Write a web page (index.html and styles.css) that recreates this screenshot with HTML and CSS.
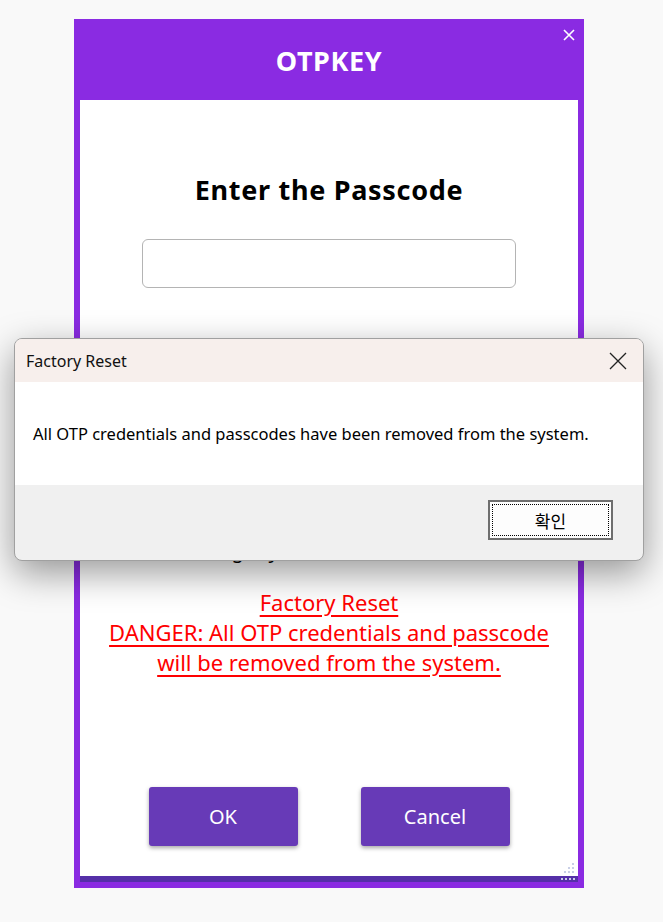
FILE: index.html
```html
<!DOCTYPE html>
<html lang="en">
<head>
    <meta charset="UTF-8">
    <meta name="viewport" content="width=device-width, initial-scale=1.0">
    <title>OTPKEY</title>
    <link rel="stylesheet" href="styles.css">
</head>
<body>
    <div class="window">
        <div class="titlebar">
            <h1>OTPKEY</h1>
            <svg class="close" width="12" height="12" viewBox="0 0 12 12">
                <path d="M1 1 L11 11 M11 1 L1 11" stroke="#fff" stroke-width="1.6" fill="none"/>
            </svg>
        </div>

        <div class="content">
            <h2>Enter the Passcode</h2>
            <input type="password" class="passcode">

            <p class="hint">Forgot your PIN? Use Reset</p>

            <a class="danger" href="#">Factory Reset<br>DANGER: All OTP credentials and passcode<br>will be removed from the system.</a>

            <div class="actions">
                <button class="btn">OK</button>
                <button class="btn">Cancel</button>
            </div>

            <svg class="grip" width="16" height="16" viewBox="0 0 16 16">
                <rect x="13" y="1" width="2" height="2" fill="#c9cfe6"/>
                <rect x="13" y="5" width="2" height="2" fill="#c9cfe6"/>
                <rect x="9" y="5" width="2" height="2" fill="#c9cfe6"/>
                <rect x="13" y="9" width="2" height="2" fill="#c9cfe6"/>
                <rect x="9" y="9" width="2" height="2" fill="#c9cfe6"/>
                <rect x="5" y="9" width="2" height="2" fill="#c9cfe6"/>
            </svg>
        </div>

        <div class="statusbar">
            <span class="dots"><i></i><i></i><i></i><i></i></span>
        </div>
    </div>

    <!-- message box shown after the reset -->
    <div class="msgbox">
        <div class="msg-title">
            <span>Factory Reset</span>
            <svg width="18" height="18" viewBox="0 0 18 18">
                <path d="M1 1 L17 17 M17 1 L1 17" stroke="#222" stroke-width="1.3" fill="none"/>
            </svg>
        </div>
        <div class="msg-body">All OTP credentials and passcodes have been removed from the system.</div>
        <div class="msg-footer">
            <button class="msg-btn"><span>확인</span></button>
        </div>
    </div>
</body>
</html>
```

FILE: styles.css
```css
body {
    margin: 0;
    padding: 19px 0 0 74px;
    background-color: #f9f9f9;
    font-family: "Noto Sans", "Noto Sans CJK KR", sans-serif;
    height: 903px;
    overflow: hidden;
}
.window {
    width: 510px;
    height: 869px;
    box-sizing: border-box;
    background: #8a2be2;
    padding: 0 6px 6px;
    display: flex;
    flex-direction: column;
}
.titlebar {
    height: 81px;
    display: flex;
    align-items: center;
    justify-content: center;
    position: relative;
}
.titlebar h1 {
    margin: 2px 0 0;
    color: white;
    font-size: 27px;
    font-weight: bold;
    letter-spacing: 0.6px;
}
.titlebar .close {
    position: absolute;
    right: 3px;
    top: 10px;
}
.content {
    flex: 1;
    background: white;
    display: flex;
    flex-direction: column;
    align-items: center;
    position: relative;
}
.content h2 {
    margin: 70px 0 0;
    font-size: 27px;
    line-height: 40px;
    font-weight: bold;
    letter-spacing: 0.7px;
    color: #000;
}
.passcode {
    margin-top: 29px;
    width: 374px;
    height: 49px;
    box-sizing: border-box;
    border: 1px solid #b4b4b4;
    border-radius: 6px;
    font-size: 20px;
}
.hint {
    margin: 248px 0 0;
    font-size: 20px;
    line-height: 30px;
    color: #000;
}
.danger {
    margin-top: 21px;
    color: #f00;
    font-size: 22px;
    line-height: 30px;
    text-align: center;
    text-decoration: underline;
    text-underline-offset: 4px;
}
.actions {
    margin-top: auto;
    margin-bottom: 30px;
    display: flex;
    gap: 63px;
}
.btn {
    width: 149px;
    height: 59px;
    border: none;
    border-radius: 3px;
    background: #673ab7;
    color: white;
    font-family: "Noto Sans", sans-serif;
    font-size: 20px;
    box-shadow: 0 2px 4px rgba(0,0,0,0.35);
}
.grip {
    position: absolute;
    right: 3px;
    bottom: -2px;
}
.statusbar {
    height: 6px;
    background: #5530a8;
    display: flex;
    justify-content: flex-end;
    align-items: center;
    padding-right: 3px;
}
.dots {
    display: flex;
    gap: 2px;
}
.dots i {
    width: 2px;
    height: 2px;
    background: #c9cfe6;
}

.msgbox {
    position: absolute;
    left: 14px;
    top: 338px;
    width: 630px;
    height: 223px;
    box-sizing: border-box;
    border: 1px solid #a0a0a0;
    border-radius: 8px;
    overflow: hidden;
    background: #f0f0f0;
    box-shadow: 0 12px 36px rgba(0,0,0,0.4);
    display: flex;
    flex-direction: column;
}
.msg-title {
    height: 43px;
    background: #f7efec;
    display: flex;
    align-items: center;
    justify-content: space-between;
    padding: 0 16px 0 11px;
    font-size: 16px;
    color: #111;
}
.msg-body {
    height: 103px;
    background: white;
    display: flex;
    align-items: center;
    padding-left: 18px;
    font-family: "Noto Sans", "Noto Sans CJK KR", sans-serif;
    font-size: 16.5px;
    color: #000;
}
.msg-footer {
    flex: 1;
    display: flex;
    justify-content: flex-end;
    align-items: flex-start;
    padding: 15px 30px 0 0;
}
.msg-btn {
    width: 125px;
    height: 40px;
    padding: 2px;
    border: 2px solid #6e6e6e;
    background: #fdfdfd;
    font-family: "Noto Sans CJK KR", sans-serif;
    font-size: 17px;
    color: #000;
}
.msg-btn span {
    display: flex;
    align-items: center;
    justify-content: center;
    height: 100%;
    border: 1px dotted #000;
    box-sizing: border-box;
}
```
